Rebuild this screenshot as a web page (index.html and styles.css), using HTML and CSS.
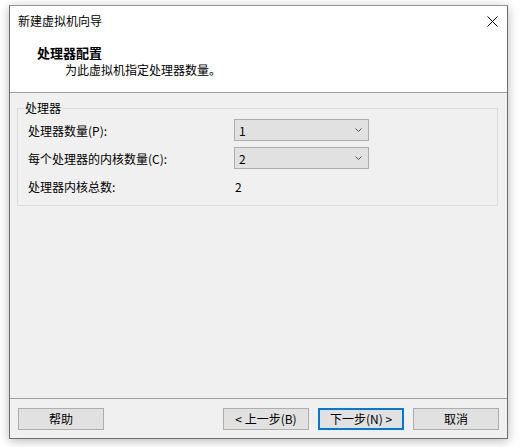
FILE: index.html
```html
<!DOCTYPE html>
<html lang="zh-CN">
<head>
<meta charset="utf-8">
<title>新建虚拟机向导</title>
<link rel="stylesheet" href="styles.css">
</head>
<body>
<div class="window">
  <div class="top">
    <div class="titlebar">
      <span class="title">新建虚拟机向导</span>
      <span class="close"><svg width="11" height="11" viewBox="0 0 11 11"><path d="M0.5 0.5 L10.5 10.5 M10.5 0.5 L0.5 10.5" stroke="#000" stroke-width="1" fill="none"/></svg></span>
    </div>
    <div class="header">
      <div class="h-title">处理器配置</div>
      <div class="h-sub">为此虚拟机指定处理器数量。</div>
    </div>
  </div>
  <div class="content">
    <fieldset class="group">
      <legend class="legend">处理器</legend>
      <div class="grid">
        <div class="label">处理器数量(P):</div>
        <div class="combo"><span>1</span><svg width="7" height="4" viewBox="0 0 7 4"><path d="M0.5 0.5 L3.5 3.5 L6.5 0.5" stroke="#505050" fill="none"/></svg></div>
        <div class="label">每个处理器的内核数量(C):</div>
        <div class="combo"><span>2</span><svg width="7" height="4" viewBox="0 0 7 4"><path d="M0.5 0.5 L3.5 3.5 L6.5 0.5" stroke="#505050" fill="none"/></svg></div>
        <div class="label">处理器内核总数:</div>
        <div class="value">2</div>
      </div>
    </fieldset>
  </div>
  <div class="footer">
    <button class="btn">帮助</button>
    <div class="spacer"></div>
    <button class="btn">&lt; 上一步(B)</button>
    <button class="btn primary">下一步(N) &gt;</button>
    <button class="btn">取消</button>
  </div>
</div>
</body>
</html>
```
FILE: styles.css
```css
* { box-sizing: border-box; }
html, body { margin: 0; padding: 0; }
body {
  background: #ffffff;
  width: 521px;
  height: 447px;
  overflow: hidden;
  font-family: "Noto Sans CJK SC", "Liberation Sans", sans-serif;
  font-size: 12px;
  color: #000;
}
.window {
  margin: 5px 0 0 9px;
  width: 499px;
  height: 434px;
  border: 1px solid #6e6e6e;
  border-top-color: #9a9a9a;
  background: #f0f0f0;
  display: flex;
  flex-direction: column;
  box-shadow: 0 2px 10px rgba(0,0,0,0.28);
}
.top {
  height: 86px;
  background: #ffffff;
  flex: none;
}
.titlebar {
  height: 29px;
  display: flex;
  align-items: center;
  padding-left: 8px;
  padding-right: 9px;
}
.title { flex: 1; line-height: 29px; }
.close { width: 11px; height: 11px; display: flex; margin-top: 1px; }
.header { padding-top: 9px; }
.h-title {
  padding-left: 27px;
  font-weight: bold;
  font-size: 13px;
  line-height: 17px;
}
.h-sub {
  padding-left: 55px;
  line-height: 17px;
}
.content {
  flex: 1;
  border-top: 1px solid #a0a0a0;
  padding: 7px 9px 0 7px;
}
.group {
  margin: 0;
  border: 1px solid #dcdcdc;
  padding: 3px 0 8px 10px;
  min-width: 0;
}
.legend {
  padding: 0 1px;
  margin-left: -4px;
  line-height: 16px;
}
.grid {
  display: grid;
  grid-template-columns: 206px 135px;
  grid-auto-rows: 22px;
  row-gap: 6px;
  align-items: center;
}
.label { line-height: 17px; }
.combo {
  height: 22px;
  border: 1px solid #adadad;
  background: #e1e1e1;
  display: flex;
  align-items: center;
  justify-content: space-between;
  padding: 0 6px 0 4px;
}
.combo span { line-height: 17px; }
.value { padding-left: 1px; line-height: 17px; }
.footer {
  flex: none;
  height: 40px;
  border-top: 1px solid #a0a0a0;
  display: flex;
  align-items: flex-start;
  padding: 9px 8px 0 8px;
  gap: 9px;
}
.spacer { flex: 1; }
.btn {
  width: 86px;
  height: 22px;
  border: 1px solid #adadad;
  background: #e1e1e1;
  font-family: inherit;
  font-size: 12px;
  color: #000;
  padding: 0;
  line-height: 18px;
}
.primary {
  border: 2px solid #0078d7;
}
```
